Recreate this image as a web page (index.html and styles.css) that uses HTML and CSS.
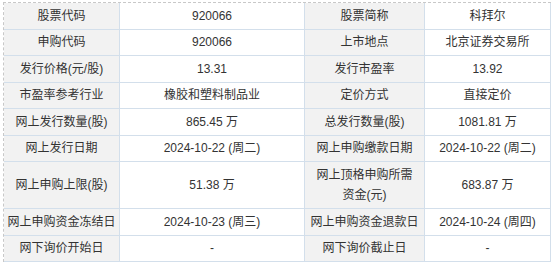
FILE: index.html
```html
<!DOCTYPE html>
<html lang="zh-CN">
<head>
    <meta charset="UTF-8">
    <title>新股申购信息</title>
    <link rel="stylesheet" href="styles.css">
</head>
<body>

<div class="ipo-box">
    <table class="ipo-table">
        <colgroup>
            <col class="c1"><col class="c2"><col class="c3"><col class="c4">
        </colgroup>
        <tr>
            <td class="label">股票代码</td><td>920066</td>
            <td class="label">股票简称</td><td>科拜尔</td>
        </tr>
        <tr>
            <td class="label">申购代码</td><td>920066</td>
            <td class="label">上市地点</td><td>北京证券交易所</td>
        </tr>
        <tr>
            <td class="label">发行价格(元/股)</td><td>13.31</td>
            <td class="label">发行市盈率</td><td>13.92</td>
        </tr>
        <tr>
            <td class="label">市盈率参考行业</td><td>橡胶和塑料制品业</td>
            <td class="label">定价方式</td><td>直接定价</td>
        </tr>
        <tr>
            <td class="label">网上发行数量(股)</td><td>865.45 万</td>
            <td class="label">总发行数量(股)</td><td>1081.81 万</td>
        </tr>
        <tr>
            <td class="label">网上发行日期</td><td>2024-10-22 (周二)</td>
            <td class="label">网上申购缴款日期</td><td>2024-10-22 (周二)</td>
        </tr>
        <tr class="tall">
            <td class="label">网上申购上限(股)</td><td>51.38 万</td>
            <td class="label">网上顶格申购所需资金(元)</td><td>683.87 万</td>
        </tr>
        <tr>
            <td class="label">网上申购资金冻结日</td><td>2024-10-23 (周三)</td>
            <td class="label">网上申购资金退款日</td><td>2024-10-24 (周四)</td>
        </tr>
        <tr>
            <td class="label">网下询价开始日</td><td>-</td>
            <td class="label">网下询价截止日</td><td>-</td>
        </tr>
    </table>
</div>

</body>
</html>
```

FILE: styles.css
```css
body {
    margin: 0;
    padding: 2px 0 0 3px;
    background: #fff;
    font-family: "Liberation Sans", "Noto Sans CJK SC", sans-serif;
    font-size: 12px;
    color: #333;
}
.ipo-box {
    width: 547px;
    border-top: 1px dashed #c8c8c8;
    border-left: 1px dashed #c8c8c8;
}
.ipo-table {
    width: 547px;
    border-collapse: separate;
    border-spacing: 0;
    table-layout: fixed;
}
.c1 { width: 116px; }
.c2 { width: 185px; }
.c3 { width: 120px; }
.c4 { width: 126px; }
.ipo-table td {
    height: 25.5px;
    padding: 0 2px;
    text-align: center;
    vertical-align: middle;
    border-right: 1px solid #d3dfeb;
    border-bottom: 1px solid #d3dfeb;
    line-height: 20px;
}
.ipo-table td.label {
    background: #f2f2f2;
}
.ipo-table tr.tall td {
    height: 46px;
}
.ipo-table tr.tall td.label {
    padding: 0 6px;
}
```
